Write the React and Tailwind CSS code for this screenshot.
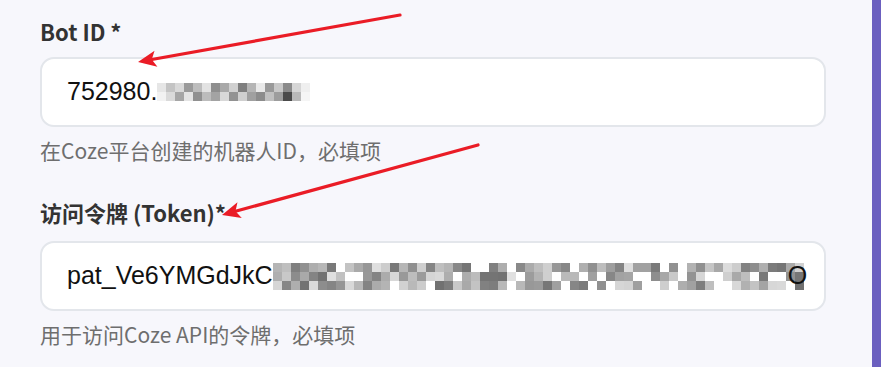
import React from "react";

const grays1 = [
  "#e6e6e6", "#c4c4c4", "#d9d9d9", "#9a9a9a", "#bdbdbd", "#e2e2e2", "#8e8e8e", "#a9a9a9",
  "#d0d0d0", "#7f7f7f", "#b5b5b5", "#e9e9e9", "#999999", "#c8c8c8", "#8a8a8a", "#d6d6d6",
  "#efefef",
];
const grays1b = [
  "#f2f2f2", "#dadada", "#a6a6a6", "#e4e4e4", "#909090", "#bcbcbc", "#a3a3a3", "#d8d8d8",
  "#929292", "#cfcfcf", "#a0a0a0", "#8c8c8c", "#c0c0c0", "#9d9d9d", "#4a4a4a", "#b9b9b9",
  "#f5f5f5",
];

function seeded(n, seed) {
  const out = [];
  let s = seed;
  for (let i = 0; i < n; i++) {
    s = (s * 9301 + 49297) % 233280;
    const r = s / 233280;
    const v = Math.round(110 + r * 145);
    out.push(r > 0.8 ? "#ffffff" : `rgb(${v},${v},${v})`);
  }
  return out;
}

const m2 = [seeded(59, 7), seeded(59, 31), seeded(59, 113)];

function Mosaic({ rows }) {
  return (
    <span className="inline-flex flex-col">
      {rows.map((row, i) => (
        <span key={i} className="flex">
          {row.map((c, j) => (
            <span key={j} className="block w-[9px] h-[9px]" style={{ background: c }} />
          ))}
        </span>
      ))}
    </span>
  );
}

function Arrow({ x1, y1, x2, y2 }) {
  const ang = Math.atan2(y2 - y1, x2 - x1);
  const len = 20;
  const w = 0.42;
  const ax = x2 - len * Math.cos(ang - w);
  const ay = y2 - len * Math.sin(ang - w);
  const bx = x2 - len * Math.cos(ang + w);
  const by = y2 - len * Math.sin(ang + w);
  const mx = x2 - 14 * Math.cos(ang);
  const my = y2 - 14 * Math.sin(ang);
  return (
    <g>
      <line x1={x1} y1={y1} x2={mx} y2={my} stroke="#ea1c26" strokeWidth="3.2" strokeLinecap="round" />
      <polygon points={`${x2},${y2} ${ax},${ay} ${mx},${my} ${bx},${by}`} fill="#ea1c26" />
    </g>
  );
}

export default function App() {
  const font = { fontFamily: "'Noto Sans CJK SC', sans-serif" };
  const mono = { fontFamily: "'Liberation Sans', Arial, sans-serif" };
  return (
    <div className="relative w-[881px] h-[367px] overflow-hidden bg-[#f7f7fc] flex">
      <div className="flex-1 flex flex-col pl-10 pr-[46px] pt-[16px]" style={font}>
        <label className="text-[22px] leading-[30px] font-semibold text-[#333333]">Bot ID *</label>
        <div className="mt-[11px] h-[70px] rounded-[14px] border-2 border-[#e3e6eb] bg-white flex items-center pl-[25px]">
          <span className="text-[25px] text-[#111111] flex items-center" style={mono}>
            752980.
            <Mosaic rows={[grays1, grays1b]} />
          </span>
        </div>
        <p className="mt-[9px] text-[21px] leading-[28px] text-[#6e6e6e]">
          在Coze平台创建的机器人ID，必填项
        </p>

        <label className="mt-[33px] text-[22px] leading-[30px] font-semibold text-[#333333]">访问令牌 (Token)*</label>
        <div className="mt-[14px] h-[70px] rounded-[14px] border-2 border-[#e3e6eb] bg-white flex items-center pl-[25px] overflow-hidden">
          <span className="text-[25px] text-[#111111] flex items-center whitespace-nowrap" style={mono}>
            pat_Ve6YMGdJkC
            <Mosaic rows={m2} />
            <span className="ml-[-16px]">O</span>
          </span>
        </div>
        <p className="mt-[9px] text-[21px] leading-[28px] text-[#6e6e6e]">
          用于访问Coze API的令牌，必填项
        </p>
      </div>
      <div className="w-[9px] bg-[#6b5fbf]" />
      <svg className="absolute inset-0 pointer-events-none" width="881" height="367">
        <Arrow x1={400} y1={15} x2={138} y2={62} />
        <Arrow x1={478} y1={145} x2={222} y2={215} />
      </svg>
    </div>
  );
}
